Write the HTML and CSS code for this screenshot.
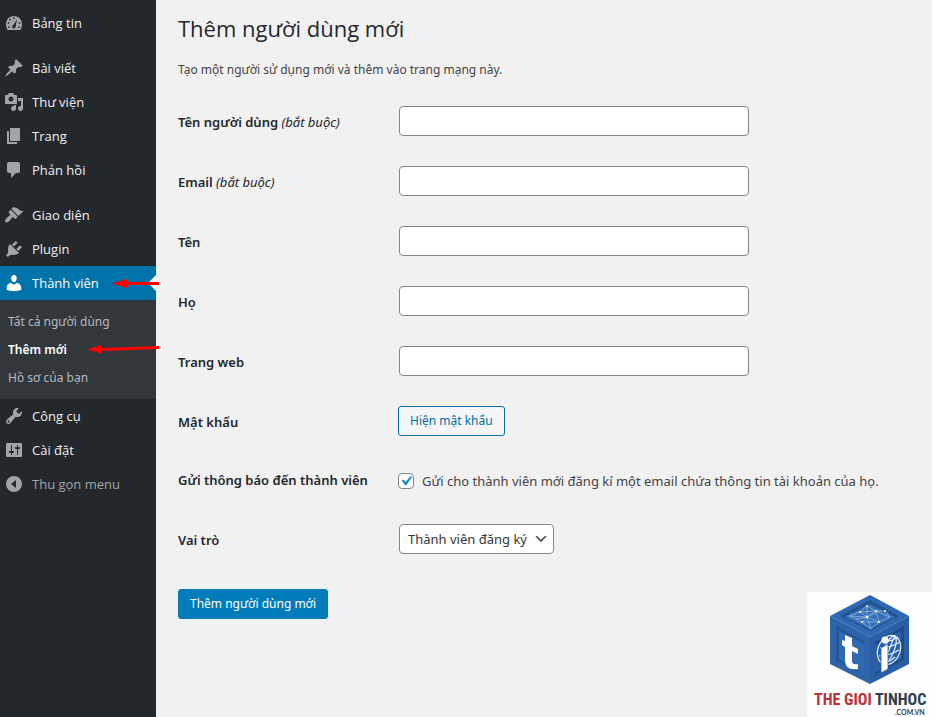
FILE: index.html
```html
<!DOCTYPE html>
<html lang="vi">
<head>
<meta charset="utf-8">
<meta name="viewport" content="width=device-width, initial-scale=1">
<title>Thêm người dùng mới</title>
<link rel="stylesheet" href="styles.css">
</head>
<body>
<div class="admin">
  <nav class="sidebar">
    <ul class="menu">
      <li><a class="menu-link" href="#"><svg class="icon" viewBox="0 0 20 20"><path fill-rule="evenodd" d="M3.76 17h12.48c1.1-1.71 1.76-3.75 1.76-6 0-4.42-3.58-8-8-8s-8 3.58-8 8c0 2.25.66 4.29 1.76 6zM10 4.200a.9.9 0 1 1 0 1.800.9.9 0 0 1 0-1.800zM6 5.700a.9.9 0 1 1 0 1.800.9.9 0 0 1 0-1.800zM4.500 9.200a.9.9 0 1 1 0 1.800.9.9 0 0 1 0-1.800zM15.500 9.200a.9.9 0 1 1 0 1.800.9.9 0 0 1 0-1.800zM5 13.200a.9.9 0 1 1 0 1.800.9.9 0 0 1 0-1.800zM15 13.200a.9.9 0 1 1 0 1.800.9.9 0 0 1 0-1.800zM13 6.500L11.600 13.600a1.700 1.700 0 1 1-2.300-1.500z"/></svg>Bảng tin</a></li>
      <li class="group"><a class="menu-link" href="#"><svg class="icon" viewBox="0 0 20 20"><path d="M10.44 3.02l1.82-1.82 6.36 6.35-1.83 1.82c-1.05-.68-2.48-.57-3.41.36l-.75.75c-.92.93-1.04 2.35-.35 3.41l-1.83 1.82-2.41-2.41-2.8 2.79c-.42.42-3.38 2.71-3.8 2.29s1.86-3.39 2.28-3.81l2.79-2.79L4.1 9.36l1.83-1.82c1.05.69 2.48.57 3.4-.36l.75-.75c.93-.92 1.05-2.35.36-3.41z"/></svg>Bài viết</a></li>
      <li><a class="menu-link" href="#"><svg class="icon" viewBox="0 0 20 20"><path d="M13 11V4c0-.55-.45-1-1-1h-1.67L9 1H5L3.67 3H2c-.55 0-1 .45-1 1v7c0 .55.45 1 1 1h10c.55 0 1-.45 1-1zM7 4.5c1.38 0 2.500 1.120 2.500 2.500S8.380 9.500 7 9.500 4.500 8.380 4.500 7 5.620 4.500 7 4.500zM14 6h5v10.500c0 1.380-1.120 2.500-2.500 2.500S14 17.880 14 16.500s1.120-2.500 2.500-2.500c.17 0 .34.02.5.05V9h-3V6zm-4 8.050V13h2v3.500c0 1.380-1.120 2.500-2.500 2.500S7 17.880 7 16.500 8.120 14 9.500 14c.17 0 .34.02.5.05z"/></svg>Thư viện</a></li>
      <li><a class="menu-link" href="#"><svg class="icon" viewBox="0 0 20 20"><path d="M6 15V2h10v13H6zm-1 1h8v2H3V5h2v11z"/></svg>Trang</a></li>
      <li><a class="menu-link" href="#"><svg class="icon" viewBox="0 0 20 20"><path d="M5 2h9c1.1 0 2 .9 2 2v7c0 1.1-.9 2-2 2h-2l-5 5v-5H5c-1.1 0-2-.9-2-2V4c0-1.1.9-2 2-2z"/></svg>Phản hồi</a></li>
      <li class="group"><a class="menu-link" href="#"><svg class="icon" viewBox="0 0 20 20"><path d="M14.48 11.06L7.41 3.99l1.5-1.5c.5-.56 2.3-.47 3.51.32 1.21.8 1.43 1.28 2.91 2.1 1.18.64 2.45 1.26 4.45.85zm-.71.71L6.7 4.7 4.93 6.47c-.39.39-.39 1.02 0 1.41l1.06 1.06c.39.39.39 1.03 0 1.42-.6.6-1.43 1.11-2.21 1.69-.35.26-.7.53-1.01.84C1.43 14.23.4 16.08 1.4 17.07c.99 1 2.84-.03 4.18-1.36.31-.31.58-.66.85-1.02.57-.78 1.08-1.61 1.69-2.21.39-.39 1.02-.39 1.41 0l1.06 1.06c.39.39 1.02.39 1.41 0z"/></svg>Giao diện</a></li>
      <li><a class="menu-link" href="#"><svg class="icon" viewBox="0 0 20 20"><path d="M13.11 4.36L9.87 7.6 8 5.73l3.24-3.24c.35-.34 1.05-.2 1.56.32.52.51.66 1.21.31 1.55zm-8 1.77l.91-1.12 9.01 9.01-1.19.84c-.71.71-2.63 1.16-3.82 1.16H6.14L4.9 17.26c-.59.59-1.54.59-2.12 0-.59-.58-.59-1.53 0-2.12l1.24-1.24v-3.88c0-1.13.4-3.19 1.09-3.89zm7.26 3.97l3.24-3.24c.34-.35 1.04-.21 1.55.31.52.51.66 1.21.31 1.55l-3.24 3.25z"/></svg>Plugin</a></li>
      <li class="current"><a class="menu-link" href="#"><svg class="icon" viewBox="0 0 20 20"><path d="M10 9.25c-2.27 0-2.73-3.44-2.73-3.44C7 4.02 7.82 2 9.97 2c2.16 0 2.98 2.02 2.71 3.81 0 0-.41 3.44-2.68 3.44zm0 2.57L12.72 10c2.39 0 4.52 2.33 4.52 4.53v2.49s-3.65 1.13-7.24 1.13c-3.65 0-7.24-1.13-7.24-1.13v-2.49c0-2.25 1.94-4.48 4.47-4.48z"/></svg>Thành viên</a>
        <ul class="submenu">
          <li><a href="#">Tất cả người dùng</a></li>
          <li><a class="active" href="#" aria-current="page">Thêm mới</a></li>
          <li><a href="#">Hồ sơ của bạn</a></li>
        </ul>
        <svg class="pointers" viewBox="0 0 80 90" aria-hidden="true"><path d="M32 17.500L47 13v3h32v3H47v3zM7 83.500L21 79v3l58-2v3l-58 2v2.500z"/></svg>
      </li>
      <li><a class="menu-link" href="#"><svg class="icon" viewBox="0 0 20 20"><path d="M16.68 9.77c-1.34 1.34-3.3 1.67-4.95.99l-5.41 6.52c-.99.99-2.59.99-3.58 0s-.99-2.59 0-3.57l6.52-5.42c-.68-1.65-.35-3.61.99-4.95 1.28-1.28 3.12-1.62 4.72-1.06l-2.89 2.89 2.82 2.82 2.86-2.87c.53 1.58.18 3.39-1.08 4.65zM3.81 16.21c.4.39 1.04.39 1.43 0 .4-.4.4-1.04 0-1.43-.39-.4-1.03-.4-1.43 0-.39.39-.39 1.03 0 1.43z"/></svg>Công cụ</a></li>
      <li><a class="menu-link" href="#"><svg class="icon" viewBox="0 0 20 20"><path d="M18 16V4c0-.55-.45-1-1-1H3c-.55 0-1 .45-1 1v12c0 .55.45 1 1 1h14c.55 0 1-.45 1-1zM8 11h1c.55 0 1 .45 1 1s-.45 1-1 1H8v1.500c0 .28-.22.5-.5.5s-.5-.22-.5-.5V13H6c-.55 0-1-.45-1-1s.45-1 1-1h1V5.500c0-.28.22-.5.5-.5s.5.22.5.5V11zm5-2h-1c-.55 0-1-.45-1-1s.45-1 1-1h1V5.500c0-.28.22-.5.5-.5s.5.22.5.5V7h1c.55 0 1 .45 1 1s-.45 1-1 1h-1v5.500c0 .28-.22.5-.5.5s-.5-.22-.5-.5V9z"/></svg>Cài đặt</a></li>
      <li><button class="menu-link collapse" type="button"><svg class="icon" viewBox="0 0 20 20"><path fill-rule="evenodd" d="M10 2a8 8 0 1 0 0 16 8 8 0 0 0 0-16zM12 6v8l-5-4z"/></svg>Thu gọn menu</button></li>
    </ul>
  </nav>

  <main class="content">
    <h1>Thêm người dùng mới</h1>
    <p class="intro">Tạo một người sử dụng mới và thêm vào trang mạng này.</p>
    <form>
      <div class="row"><label class="name" for="login">Tên người dùng <em>(bắt buộc)</em></label><input class="text" id="login" type="text"></div>
      <div class="row"><label class="name" for="email">Email <em>(bắt buộc)</em></label><input class="text" id="email" type="email"></div>
      <div class="row"><label class="name" for="first">Tên</label><input class="text" id="first" type="text"></div>
      <div class="row"><label class="name" for="last">Họ</label><input class="text" id="last" type="text"></div>
      <div class="row"><label class="name" for="url">Trang web</label><input class="text" id="url" type="url"></div>
      <div class="row"><label class="name" for="password">Mật khẩu</label><button class="button" id="password" type="button">Hiện mật khẩu</button></div>
      <div class="row notify"><span class="name">Gửi thông báo đến thành viên</span><div class="check"><input id="notify" type="checkbox" checked><label for="notify">Gửi cho thành viên mới đăng kí một email chứa thông tin tài khoản của họ.</label></div></div>
      <div class="row"><label class="name" for="role">Vai trò</label><div class="select"><select id="role"><option>Thành viên đăng ký</option></select><svg viewBox="0 0 20 20" aria-hidden="true"><path d="M5 6l5 5 5-5 2 1-7 7-7-7z"/></svg></div></div>
      <button class="button primary" type="submit">Thêm người dùng mới</button>
    </form>
  </main>

  <svg class="brand" viewBox="0 0 125 125" role="img" aria-label="The Gioi Tinhoc">
    <rect width="125" height="125" fill="#fdfdfd"/>
    <path fill="#2f68b3" d="M63 3l39 21-39 21-40-21z"/>
    <path fill="#235391" d="M63 8l29 16-29 15-30-15z"/>
    <path fill="#3570b8" d="M63 12l25 13-25 12-26-12z"/>
    <path fill="#2c63a9" d="M23 24l40 21v47L23 72z"/>
    <path fill="#24569a" d="M29 34l28 15v34L29 68z"/>
    <path fill="#2f6ab0" d="M32 39l25 13v31L32 67z"/>
    <path fill="#2a5fa6" d="M63 45l39-21v48L63 92z"/>
    <path fill="#1f4d8a" d="M68 50l29-16v34L68 83z"/>
    <path fill="#2a62a9" d="M68 53l26-14v28L68 80z"/>
    <path fill="none" stroke="#a9cbe9" stroke-width=".6" d="M42 24l11-4 7-6 9 5 9 0 5 6-11 5-8 7-9-7-6-3-7-3 18 1 12-6M60 14l0 11-5 5M53 20l7 5 4 12M69 19l3 11-12-5M83 25l-14-6-9 6-11 2M72 30l-17 0M69 19l-16 1"/>
    <g fill="#fff"><circle cx="60" cy="14" r="1"/><circle cx="53" cy="20" r="1"/><circle cx="60" cy="25" r="1.200"/><circle cx="69" cy="19" r="1"/><circle cx="72" cy="30" r="1"/><circle cx="78" cy="19" r="1"/><circle cx="55" cy="30" r="1"/></g>
    <path fill="#fff" d="M38 43l7 3v8l6 3v5l-6-3v10q0 4 6 3v5q-13 2-13-9V55l-3-2v-5l3 1z"/>
    <g fill="none" stroke="#e7f2ff" stroke-width="1.200"><ellipse cx="82" cy="58" rx="11" ry="15" transform="rotate(22 82 58)"/><ellipse cx="82" cy="58" rx="5" ry="15" transform="rotate(22 82 58)"/><path d="M88 43L76 73M73 56q10 0 20-6M72 64q10 0 20-6M76 49q8 1 15-4M75 71q8-1 13-6"/></g>
    <path fill="#fff" stroke="#265ba1" stroke-width=".8" d="M74 56l7-4v25l-7 4z"/>
    <circle cx="78" cy="48" r="3.500" fill="#fff"/>
    <text class="brand-name" x="7" y="113"><tspan fill="#bd3039">THE GIOI</tspan> <tspan fill="#303e49">TINHOC</tspan></text>
    <text class="brand-domain" x="88" y="123">.COM.VN</text>
  </svg>
</div>
</body>
</html>
```
FILE: styles.css
```css
* { box-sizing: border-box; }

body {
  margin: 0;
  background: #f1f1f1;
  color: #444;
  font: 13px/20px "Noto Sans", "Open Sans", sans-serif;
}

.admin {
  position: relative;
  display: flex;
  min-height: 100vh;
}

/* Sidebar */
.sidebar {
  flex: 0 0 156px;
  background: #23282d;
  font-family: "Open Sans", "Noto Sans", sans-serif;
}

.menu,
.submenu {
  margin: 0;
  padding: 0;
  list-style: none;
}

.menu { padding-top: 6px; }
.group { margin-top: 11px; }

.menu-link {
  display: flex;
  align-items: center;
  gap: 8px;
  width: 100%;
  height: 34px;
  padding: 0 4px;
  border: 0;
  background: none;
  color: #eee;
  font: inherit;
  text-decoration: none;
}

.icon {
  flex: none;
  width: 20px;
  height: 20px;
  fill: #a0a5aa;
}

.collapse { color: #a0a5aa; }

.current { position: relative; }

.current > .menu-link {
  background: #0073aa;
  color: #fff;
}

.current .icon { fill: #fff; }

.current > .menu-link::after {
  content: "";
  margin-left: auto;
  margin-right: -4px;
  border: 8px solid transparent;
  border-left-width: 0;
  border-right-color: #f1f1f1;
}

.submenu {
  padding: 8px 8px 7px;
  background: #32373c;
}

.submenu a {
  display: block;
  color: #b4b9be;
  font-family: "Noto Sans", "Open Sans", sans-serif;
  font-size: 12px;
  line-height: 28px;
  text-decoration: none;
}

.submenu .active {
  color: #fff;
  font-weight: 600;
}

.pointers {
  position: absolute;
  top: 0;
  left: 80px;
  width: 80px;
  height: 90px;
  fill: #f00;
}

/* Form page */
.content {
  flex: 1;
  min-width: 0;
  padding: 13px 22px 20px;
}

h1 {
  margin: 0;
  color: #23282d;
  font-family: "Open Sans", "Noto Sans", sans-serif;
  font-size: 22px;
  font-weight: 400;
  line-height: 30px;
}

.intro {
  margin: 17px 0 11px;
  font-size: 12px;
}

.row {
  display: grid;
  grid-template-columns: 220px minmax(0, 1fr);
  align-items: center;
  justify-items: start;
  min-height: 60px;
}

.notify { min-height: 58px; }

.name {
  color: #23282d;
  font-weight: 600;
}

label.name { padding-top: 2px; }

.name em { font-weight: 400; }

.text,
select {
  height: 30px;
  margin: 0 1px;
  border: 1px solid #7e8993;
  border-radius: 4px;
  background: #fff;
  color: #32373c;
  font: inherit;
}

.text {
  width: 350px;
  max-width: 100%;
  padding: 0 8px;
}

.button {
  height: 30px;
  padding: 0 11px;
  border: 1px solid #0071a1;
  border-radius: 3px;
  background: #f3f5f6;
  color: #0071a1;
  font: inherit;
  font-size: 12px;
}

.primary {
  margin-top: 20px;
  border-color: #007cba;
  background: #007cba;
  color: #fff;
}

.check {
  display: flex;
  align-items: center;
  gap: 8px;
  padding-top: 2px;
}

.check input {
  appearance: none;
  flex: none;
  width: 16px;
  height: 16px;
  margin: 0;
  border: 1px solid #7e8993;
  border-radius: 4px;
  background: #fff;
}

.check input:checked {
  background: #fff url("data:image/svg+xml,%3Csvg xmlns='http://www.w3.org/2000/svg' viewBox='0 0 20 20'%3E%3Cpath d='M14.830 4.890l1.340.940-5.810 8.380H9.020L5.780 9.670l1.340-1.250 2.570 2.400z' fill='%231e8cbe'/%3E%3C/svg%3E") center / 20px no-repeat;
}

.select { position: relative; }

select {
  display: block;
  appearance: none;
  padding: 0 25px 0 8px;
}

.select svg {
  position: absolute;
  top: 7px;
  right: 6px;
  width: 16px;
  height: 16px;
  fill: #555;
  pointer-events: none;
}

/* Site logo */
.brand {
  position: absolute;
  right: 0;
  bottom: 0;
  width: 125px;
  height: 125px;
}

.brand-name {
  font: bold 16px "Liberation Sans Narrow", "Roboto Condensed", "Liberation Sans", sans-serif;
}

.brand-domain {
  fill: #303e49;
  font: bold 7px Lato, sans-serif;
}
```
